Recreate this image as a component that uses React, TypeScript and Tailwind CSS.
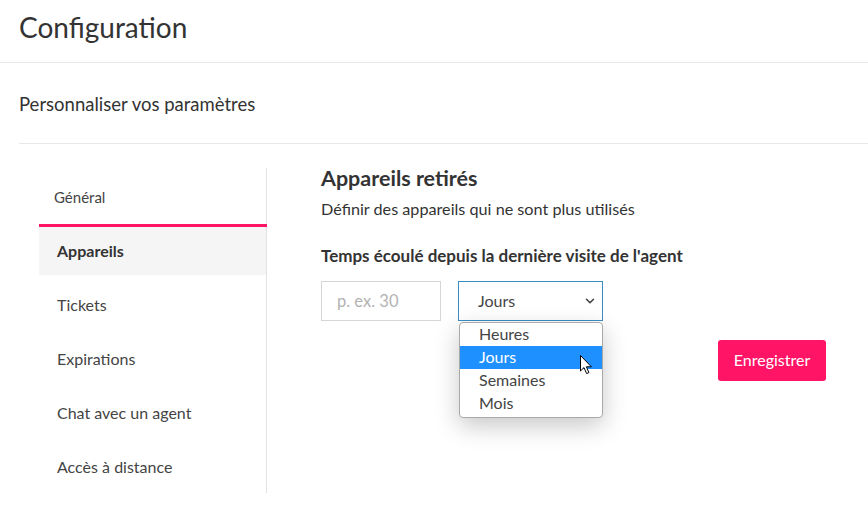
import { ChevronDown } from 'lucide-react';

const NAV_ITEMS = ['Tickets', 'Expirations', 'Chat avec un agent', 'Accès à distance'];
const UNITS = ['Heures', 'Jours', 'Semaines', 'Mois'];

function Cursor() {
  return (
    <svg width="13" height="20" viewBox="0 0 13 20" className="absolute left-[120px] top-[32px]">
      <path
        d="M0.5 0.5 L0.5 16 L4 12.6 L6.6 18.6 L8.9 17.6 L6.4 11.8 L11.4 11.8 Z"
        fill="#fff"
        stroke="#000"
        strokeWidth="1"
        strokeLinejoin="round"
      />
    </svg>
  );
}

export default function App() {
  return (
    <div className="w-[868px] h-[525px] bg-white text-[#333] overflow-hidden" style={{ fontFamily: 'Lato, "Noto Sans", sans-serif' }}>
      <div className="h-[63px] px-[19px] flex items-center border-b border-[#e8e8e8]">
        <h1 className="text-[28px] leading-none text-[#333] pb-[8px]">Configuration</h1>
      </div>

      <div className="pl-[19px]">
        <div className="h-[81px] flex items-center border-b border-[#e8e8e8]">
          <h2 className="text-[18.5px] text-[#333] pt-[3px]">Personnaliser vos paramètres</h2>
        </div>

        <div className="flex pt-[24px] pl-[20px] pr-[42px]">
          <nav className="w-[228px] shrink-0 border-r border-[#e3e3e3] pb-[2px]">
            <div className="h-[56px] flex items-center pl-[15px] pt-[2px] text-[15px] text-[#444]">Général</div>
            <div className="h-[3px] bg-[#ff1466] -mr-px" />
            <div className="flex flex-col gap-[6px]">
              <div className="h-[48px] flex items-center pl-[18px] bg-[#f5f5f5] text-[16px] font-bold text-[#333]">
                Appareils
              </div>
              {NAV_ITEMS.map((item) => (
                <div key={item} className="h-[48px] flex items-center pl-[18px] text-[16px] text-[#444]">
                  {item}
                </div>
              ))}
            </div>
          </nav>

          <div className="flex-1 pl-[54px]">
            <h3 className="-mt-[2px] text-[21.5px] leading-[24px] font-bold text-[#333]">Appareils retirés</h3>
            <p className="mt-[9px] text-[16.2px] leading-[20px] text-[#333]">Définir des appareils qui ne sont plus utilisés</p>
            <p className="mt-[27px] text-[17px] leading-[20px] font-bold text-[#333]">
              Temps écoulé depuis la dernière visite de l'agent
            </p>

            <div className="mt-[15px] flex gap-[17px]">
              <div className="w-[120px] h-[40px] border border-[#d6d6d6] flex items-center px-[15px] text-[16.5px] text-[#b3b3b3]">
                p. ex. 30
              </div>
              <div className="relative">
                <div className="w-[145px] h-[40px] border border-[#3a8dc4] flex items-center justify-between pl-[19px] pr-[5px] text-[16px] text-[#444]">
                  <span>Jours</span>
                  <ChevronDown size={14} strokeWidth={2.8} className="text-[#444]" />
                </div>
                <div className="absolute left-px top-[41px] w-[144px] pb-[2px] bg-white border border-[#a9a9a9] rounded-[4px] shadow-[0_8px_24px_rgba(0,0,0,0.22)] overflow-hidden">
                  {UNITS.map((unit) => (
                    <div
                      key={unit}
                      className={
                        unit === 'Jours'
                          ? 'h-[23px] flex items-center pl-[19px] pb-px text-[16px] bg-[#1e90ff] text-white'
                          : 'h-[23px] flex items-center pl-[19px] pb-px text-[16px] text-[#444]'
                      }
                    >
                      {unit}
                    </div>
                  ))}
                  <Cursor />
                </div>
              </div>
            </div>

            <div className="mt-[19px] flex justify-end">
              <button className="w-[108px] h-[41px] pb-[2px] bg-[#ff1466] rounded-[3px] text-white text-[16px]">Enregistrer</button>
            </div>
          </div>
        </div>
      </div>
    </div>
  );
}
